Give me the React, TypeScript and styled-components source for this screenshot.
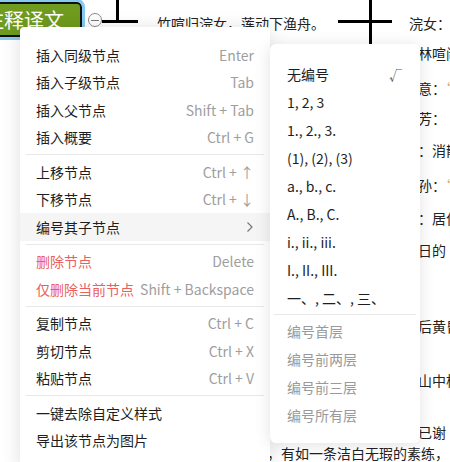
import React from "react";
import styled, { createGlobalStyle } from "styled-components";

const GlobalStyle = createGlobalStyle`
  html, body { margin: 0; padding: 0; background: #fff; }
  body { font-family: "Noto Sans CJK SC", "Noto Sans", sans-serif; }
`;

const Canvas = styled.div`
  position: relative;
  width: 450px;
  height: 462px;
  overflow: hidden;
  background: #fff;
`;

const RootNode = styled.div`
  position: absolute;
  left: -34px;
  top: 2px;
  width: 116px;
  height: 35px;
  box-sizing: border-box;
  border: 2px solid #111;
  border-radius: 5px;
  background: #6f9b1e;
  outline: 3px solid #86cbef;
  outline-offset: 0;
  color: #fff;
  font-size: 20px;
  line-height: 31px;
  text-align: center;
  white-space: nowrap;
`;

const Collapse = styled.div`
  position: absolute;
  left: 88px;
  top: 13px;
  width: 14px;
  height: 14px;
  box-sizing: border-box;
  border: 1px solid #8a8a8a;
  border-radius: 50%;
  background: #fff;
  display: flex;
  align-items: center;
  justify-content: center;
  &::after {
    content: "";
    width: 8px;
    height: 1px;
    background: #777;
  }
`;

const Line = styled.div<{ $x: number; $y: number; $w: number; $h: number }>`
  position: absolute;
  left: ${(p) => p.$x}px;
  top: ${(p) => p.$y}px;
  width: ${(p) => p.$w}px;
  height: ${(p) => p.$h}px;
  background: #000;
`;

const NodeText = styled.div<{ $x: number; $y: number }>`
  position: absolute;
  left: ${(p) => p.$x}px;
  top: ${(p) => p.$y - 9}px;
  font-size: 14px;
  line-height: 18px;
  color: #222;
  white-space: nowrap;
`;

const Accent = styled.span`
  color: #e9a23b;
`;

const Menu = styled.div`
  position: absolute;
  left: 20px;
  top: 27px;
  width: 250px;
  padding: 14px 0;
  box-sizing: border-box;
  background: #fff;
  border-radius: 4px;
  box-shadow: 0 2px 20px rgba(0, 0, 0, 0.13);
`;

const SubMenu = styled.div`
  position: absolute;
  left: 270px;
  top: 44px;
  width: 150px;
  padding: 16px 0 14px;
  box-sizing: border-box;
  background: #fff;
  border-radius: 6px;
  box-shadow: 0 2px 16px rgba(0, 0, 0, 0.12);
`;

const Item = styled.div<{ $danger?: boolean; $active?: boolean; $muted?: boolean; $h?: number; $pad?: number }>`
  display: flex;
  align-items: center;
  justify-content: space-between;
  height: ${(p) => p.$h ?? 27.5}px;
  padding: 0 ${(p) => p.$pad ?? 16}px;
  font-size: 14px;
  white-space: nowrap;
  color: ${(p) => (p.$danger ? "#e9615f" : p.$muted ? "#9a9a9a" : "#1e1e1e")};
  background: ${(p) => (p.$active ? "#f5f5f5" : "transparent")};
`;

const Shortcut = styled.span`
  color: #9e9e9e;
`;

const Check = styled.span`
  color: #555;
  font-size: 13px;
  margin-right: 1px;
`;

const Arrow = styled.span`
  display: flex;
  align-items: center;
  color: #777;
`;

const Divider = styled.div<{ $inset: number; $gap: number }>`
  height: 1px;
  margin: ${(p) => p.$gap}px ${(p) => p.$inset}px;
  background: #e8e8e8;
`;

type MenuEntry =
  | { type: "item"; label: string; key?: string; danger?: boolean; active?: boolean; sub?: boolean }
  | { type: "divider" };

const menuEntries: MenuEntry[] = [
  { type: "item", label: "插入同级节点", key: "Enter" },
  { type: "item", label: "插入子级节点", key: "Tab" },
  { type: "item", label: "插入父节点", key: "Shift + Tab" },
  { type: "item", label: "插入概要", key: "Ctrl + G" },
  { type: "divider" },
  { type: "item", label: "上移节点", key: "Ctrl + ↑" },
  { type: "item", label: "下移节点", key: "Ctrl + ↓" },
  { type: "item", label: "编号其子节点", active: true, sub: true },
  { type: "divider" },
  { type: "item", label: "删除节点", key: "Delete", danger: true },
  { type: "item", label: "仅删除当前节点", key: "Shift + Backspace", danger: true },
  { type: "divider" },
  { type: "item", label: "复制节点", key: "Ctrl + C" },
  { type: "item", label: "剪切节点", key: "Ctrl + X" },
  { type: "item", label: "粘贴节点", key: "Ctrl + V" },
  { type: "divider" },
  { type: "item", label: "一键去除自定义样式" },
  { type: "item", label: "导出该节点为图片" },
];

const numberStyles = [
  "无编号",
  "1, 2, 3",
  "1., 2., 3.",
  "(1), (2), (3)",
  "a., b., c.",
  "A., B., C.",
  "i., ii., iii.",
  "I., II., III.",
  "一、, 二、, 三、",
];

const levels = ["编号首层", "编号前两层", "编号前三层", "编号所有层"];

const sideTexts: { y: number; text: string; accent?: string }[] = [
  { y: 53, text: "竹林喧闹" },
  { y: 88, text: "诗意：", accent: "“" },
  { y: 118, text: "春芳：" },
  { y: 150, text: "歇：消散" },
  { y: 185, text: "王孙：", accent: "“" },
  { y: 218, text: "留：居住" },
  { y: 250, text: "昔日的" },
  { y: 326, text: "雨后黄昏" },
  { y: 380, text: "空山中松" },
  { y: 432, text: "花已谢" },
];

export default function App() {
  return (
    <>
      <GlobalStyle />
      <Canvas>
        <RootNode>注释译文</RootNode>
        <Collapse />
        <Line $x={102} $y={20} $w={36} $h={3} />
        <Line $x={116} $y={0} $w={3} $h={22} />
        <NodeText $x={157} $y={23}>竹喧归浣女，莲动下渔舟。</NodeText>
        <Line $x={338} $y={20} $w={54} $h={3} />
        <Line $x={369} $y={0} $w={3} $h={44} />
        <NodeText $x={409} $y={23}>浣女：</NodeText>
        {sideTexts.map((t) => (
          <NodeText key={t.y} $x={404} $y={t.y}>
            {t.text}
            {t.accent && <Accent>{t.accent}</Accent>}
          </NodeText>
        ))}
        <NodeText $x={267} $y={453}>
          ，有如一条洁白无瑕的素练，<Accent>“</Accent>
        </NodeText>

        <Menu>
          {menuEntries.map((e, i) =>
            e.type === "divider" ? (
              <Divider key={i} $inset={6} $gap={3} />
            ) : (
              <Item key={i} $danger={e.danger} $active={e.active}>
                <span>{e.label}</span>
                {e.key && <Shortcut>{e.key}</Shortcut>}
                {e.sub && (
                  <Arrow>
                    <svg width="8" height="12" viewBox="0 0 8 12" fill="none">
                      <path d="M1.5 1.5 L6 6 L1.5 10.5" stroke="#777" strokeWidth="1.2" />
                    </svg>
                  </Arrow>
                )}
              </Item>
            )
          )}
        </Menu>

        <SubMenu>
          {numberStyles.map((s, i) => (
            <Item key={s} $h={28} $pad={17}>
              <span>{s}</span>
              {i === 0 && <Check>√</Check>}
            </Item>
          ))}
          <Divider $inset={4} $gap={2} />
          {levels.map((l) => (
            <Item key={l} $h={28} $pad={17} $muted>
              <span>{l}</span>
            </Item>
          ))}
        </SubMenu>
      </Canvas>
    </>
  );
}
